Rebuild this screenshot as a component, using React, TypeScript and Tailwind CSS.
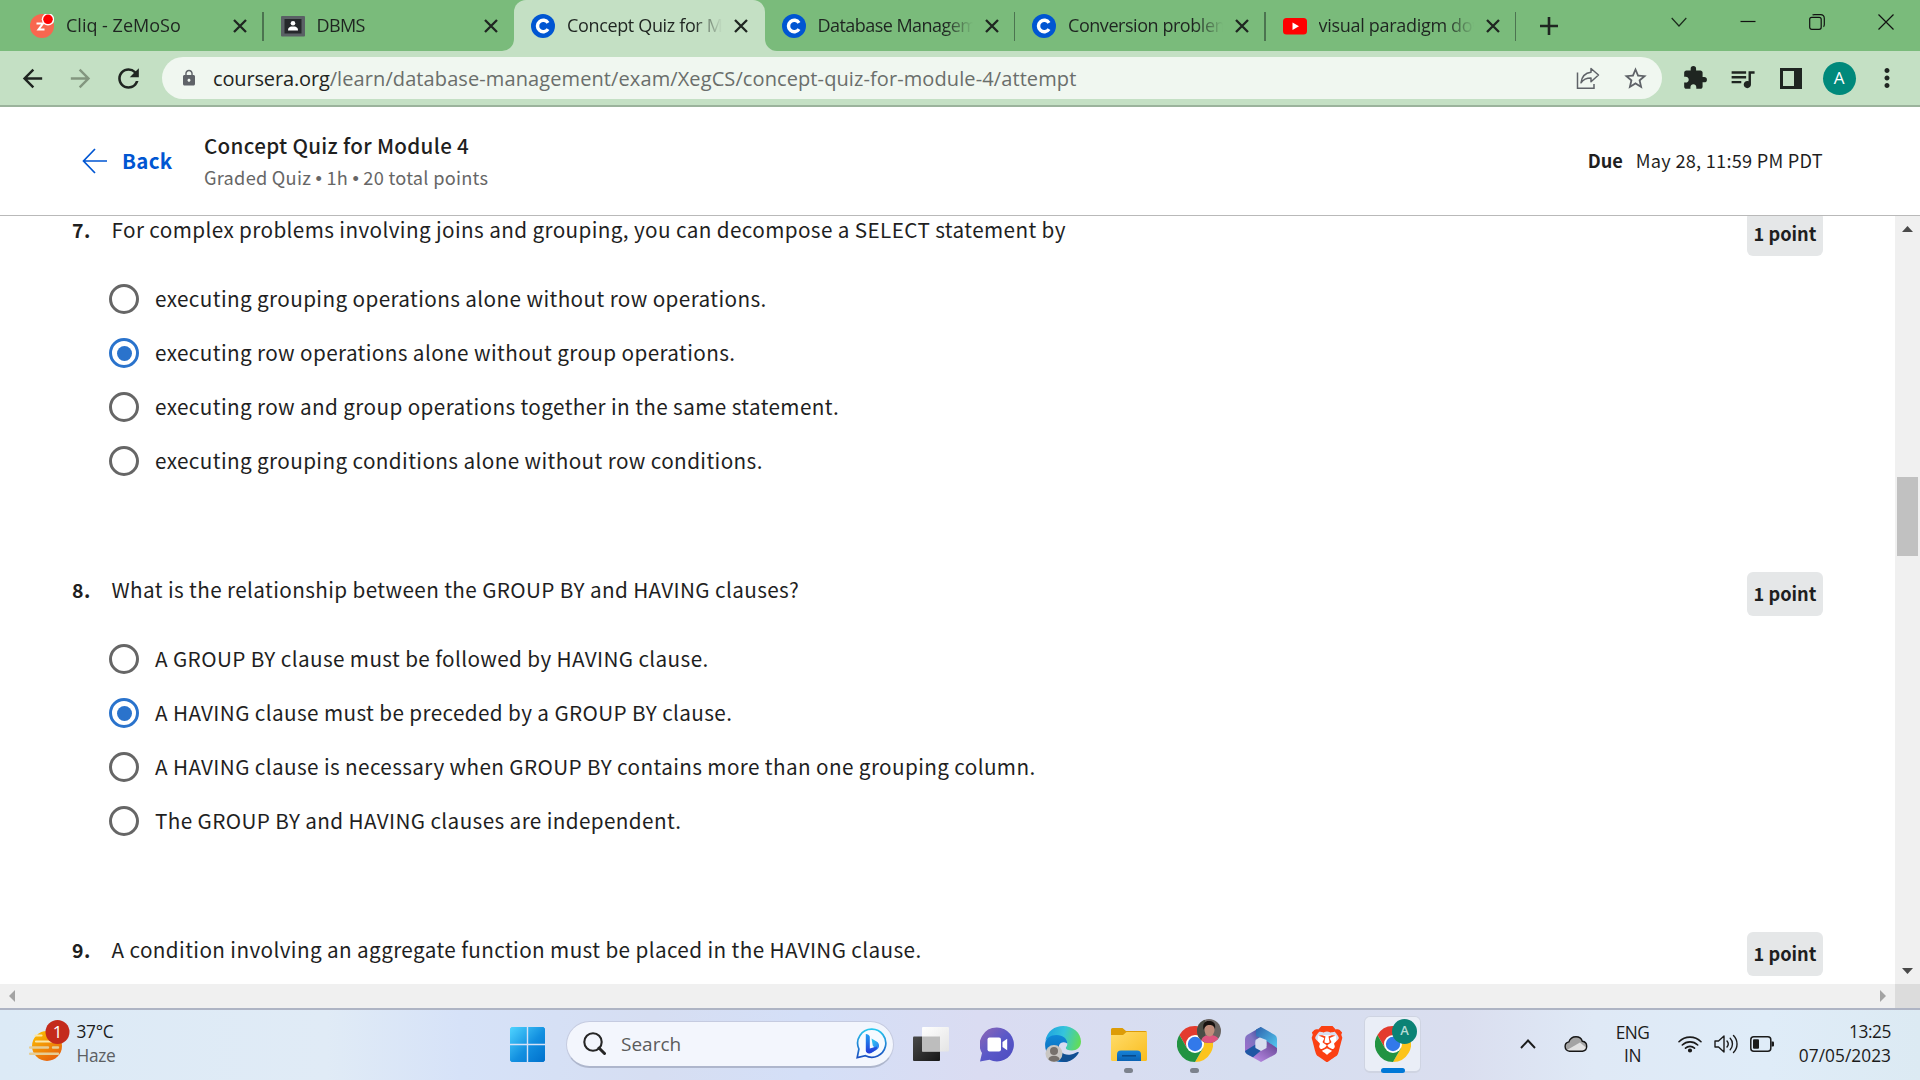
import React from "react";
import {
  MdArrowBack,
  MdArrowForward,
  MdExtension,
  MdLock,
  MdMoreVert,
  MdQueueMusic,
  MdRefresh,
  MdStarBorder,
} from "react-icons/md";
import { SiBrave } from "react-icons/si";

/* ---------- browser tabs ---------- */

function CliqIcon() {
  return (
    <svg viewBox="0 0 24 24" className="size-6 shrink-0">
      <circle cx="12" cy="12" r="12" fill="#f8674f" />
      <path d="M6.500 9.500h6.500l-4.500 6H14.500" fill="none" stroke="#fff" strokeWidth="2" />
      <circle cx="18" cy="5.300" r="6.200" fill="#fff" />
      <circle cx="18" cy="5.300" r="4.800" fill="#fe0000" />
    </svg>
  );
}

function ClassroomIcon() {
  return (
    <svg viewBox="0 0 24 24" className="size-6 shrink-0">
      <rect x="0" y="2" width="24" height="20.500" rx="1" fill="#5a6065" />
      <rect x="3.500" y="5" width="17" height="14.500" fill="#25282b" />
      <circle cx="12" cy="9.300" r="2.300" fill="#fff" />
      <path d="M7 16.500c0-3.600 2.500-4 5-4s5 .4 5 4z" fill="#fff" />
    </svg>
  );
}

function CourseraIcon() {
  return (
    <svg viewBox="0 0 24 24" className="size-6 shrink-0">
      <circle cx="12" cy="12" r="12" fill="#0056d2" />
      <path d="M17 8.900A5.700 5.700 0 1 0 17 15.100" fill="none" stroke="#fff" strokeWidth="3.500" />
    </svg>
  );
}

function YoutubeIcon() {
  return (
    <svg viewBox="0 0 24 24" className="size-6 shrink-0">
      <rect x="0" y="4" width="24" height="16.500" rx="3.500" fill="#f00" />
      <path d="M9.500 8.500v7.500l6.500-3.750z" fill="#fff" />
    </svg>
  );
}

const tabs = [
  { title: "Cliq - ZeMoSo", icon: <CliqIcon />, tracking: "tracking-[0px]" },
  { title: "DBMS", icon: <ClassroomIcon />, tracking: "tracking-[-0.6px]" },
  { title: "Concept Quiz for Module 4", icon: <CourseraIcon />, tracking: "tracking-[-0.35px]", active: true },
  { title: "Database Management", icon: <CourseraIcon />, tracking: "tracking-[-0.55px]" },
  { title: "Conversion problems", icon: <CourseraIcon />, tracking: "tracking-[-0.45px]" },
  { title: "visual paradigm download", icon: <YoutubeIcon />, tracking: "tracking-[-0.3px]" },
];

type TabProps = { title: string; icon: React.ReactNode; tracking: string; active?: boolean; separator: boolean };

function Tab({ title, icon, tracking, active, separator }: TabProps) {
  return (
    <div className={`relative flex h-[51px] w-[250.5px] shrink-0 items-center pl-[17px] ${active ? "rounded-t-xl bg-[#c4e0c4]" : ""}`}>
      {active && (
        <>
          <svg viewBox="0 0 12 12" className="absolute bottom-0 -left-3 size-3"><path d="M12 0v12H0A12 12 0 0 0 12 0z" fill="#c4e0c4" /></svg>
          <svg viewBox="0 0 12 12" className="absolute -right-3 bottom-0 size-3"><path d="M0 0v12h12A12 12 0 0 1 0 0z" fill="#c4e0c4" /></svg>
        </>
      )}
      {icon}
      <span className={`ml-3 w-[155px] overflow-hidden [mask-image:linear-gradient(to_right,#000_82%,transparent)] text-[18px] whitespace-nowrap text-[#1f2521] ${tracking}`}>
        {title}
      </span>
      <svg viewBox="0 0 14 14" className="ml-3 size-[14px] shrink-0">
        <path d="M1 1l12 12M13 1L1 13" stroke="#1f2521" strokeWidth="2.300" />
      </svg>
      {separator && <span className="absolute top-3 right-0 h-[29px] w-[1.5px] bg-[#4c7350]" />}
    </div>
  );
}

function TabStrip() {
  return (
    <div className="flex h-[51px] items-center bg-[#7abb7b] pl-[13px]">
      {tabs.map((t, i) => (
        <Tab key={t.title} {...t} separator={i !== 1 && i !== 2} />
      ))}
      <svg viewBox="0 0 18 18" className="ml-6 size-[18px]">
        <path d="M9 0v18M0 9h18" stroke="#1f2521" strokeWidth="2.600" />
      </svg>
      <div className="ml-auto flex pb-2">
        <div className="flex w-[69px] justify-center"><svg viewBox="0 0 16 16" className="size-4"><path d="M.7 4L8 12l7.300-8" fill="none" stroke="#1b2a1c" strokeWidth="1.200" /></svg></div>
        <div className="flex w-[69px] justify-center"><svg viewBox="0 0 16 16" className="size-4"><path d="M.5 7.500h15" stroke="#111" strokeWidth="1.200" /></svg></div>
        <div className="flex w-[69px] justify-center">
          <svg viewBox="0 0 16 16" className="size-4" fill="none" stroke="#111" strokeWidth="1.200">
            <rect x=".7" y="3.300" width="11.500" height="12" rx="2" />
            <path d="M3.500 1.200C4 .7 4.600.6 5.500.6h6C13.800.6 15.300 2 15.300 4.500v6c0 1-.2 1.700-.8 2.200" />
          </svg>
        </div>
        <div className="flex w-[69px] justify-center"><svg viewBox="0 0 16 16" className="size-4"><path d="M.5.500l15 15M15.500.500l-15 15" stroke="#111" strokeWidth="1.200" /></svg></div>
      </div>
    </div>
  );
}

function Toolbar() {
  return (
    <div className="flex h-14 items-center border-b-2 border-[#9bb39c] bg-[#c4e0c4] text-[#1f2521]">
      <div className="flex w-[162px] items-center pl-2">
        <div className="flex w-12 justify-center"><MdArrowBack size={29} /></div>
        <div className="flex w-12 justify-center text-[#83967f]"><MdArrowForward size={29} /></div>
        <div className="flex w-12 justify-center"><MdRefresh size={31} /></div>
      </div>
      <div className="flex h-[42px] w-[1500px] items-center rounded-full bg-[#f0f7f0] pl-[18px] text-[#6a6e6b]">
        <MdLock size={18} className="text-[#5f6368]" />
        <div className="ml-[15px] pt-px text-[20px] tracking-[0.1px] whitespace-nowrap">
          <span className="tracking-[-0.15px] text-[#1f2521]">coursera.org</span>/learn/database-management/exam/XegCS/concept-quiz-for-module-4/attempt
        </div>
        <div className="ml-auto flex pr-[3px] text-[#5f6368]">
          <div className="flex w-12 items-center justify-center">
            <svg viewBox="0 0 24 22" className="h-[22px] w-6" fill="none" stroke="currentColor" strokeWidth="1.500">
              <path d="M1.500 5.500v15.700h16.500V17" />
              <path d="M15 1.500l7.500 6.500-7.500 6.700V11C10 11 7.500 12 5 15.800 5.700 10 9 5.800 15 5.200z" strokeLinejoin="round" />
            </svg>
          </div>
          <div className="flex w-[47px] items-center justify-center"><MdStarBorder size={27} /></div>
        </div>
      </div>
      <div className="ml-auto flex items-center pr-[9px]">
        <div className="flex w-12 justify-center"><MdExtension size={26} /></div>
        <div className="flex w-12 justify-center pr-0.5"><MdQueueMusic size={29} /></div>
        <div className="flex w-12 justify-center"><div className="h-[21px] w-[22px] border-[3px] border-r-[8px] border-[#1f2521]" /></div>
        <div className="flex w-12 justify-center">
          <div className="flex size-[33px] items-center justify-center rounded-full bg-[#00897b] text-[17px] text-white">A</div>
        </div>
        <div className="flex w-12 justify-center"><MdMoreVert size={30} /></div>
      </div>
    </div>
  );
}

/* ---------- quiz page ---------- */

const questions = [
  {
    number: "7.",
    text: "For complex problems involving joins and grouping, you can decompose a SELECT statement by",
    selected: 1,
    options: [
      "executing grouping operations alone without row operations.",
      "executing row operations alone without group operations.",
      "executing row and group operations together in the same statement.",
      "executing grouping conditions alone without row conditions.",
    ],
  },
  {
    number: "8.",
    text: "What is the relationship between the GROUP BY and HAVING clauses?",
    selected: 1,
    options: [
      "A GROUP BY clause must be followed by HAVING clause.",
      "A HAVING clause must be preceded by a GROUP BY clause.",
      "A HAVING clause is necessary when GROUP BY contains more than one grouping column.",
      "The GROUP BY and HAVING clauses are independent.",
    ],
  },
  {
    number: "9.",
    text: "A condition involving an aggregate function must be placed in the HAVING clause.",
    selected: -1,
    options: [],
  },
];

function QuizHeader() {
  return (
    <header className="flex h-[109px] items-center border-b border-[#b9b9b9] bg-white pr-[97px] pl-[82px] text-[#1f1f1f]">
      <svg viewBox="0 0 26 26" className="size-[26px]" fill="none" stroke="#0056d2" strokeWidth="1.700">
        <path d="M25 13H1.500M13 1L1.500 13 13 25" />
      </svg>
      <span className="ml-[14px] w-[82px] pb-0.5 text-[20.5px] font-bold tracking-[0.3px] text-[#0056d2]">Back</span>
      <div className="pt-[3px]">
        <div className="text-[20.6px] leading-8 font-medium tracking-[0.32px]">Concept Quiz for Module 4</div>
        <div className="text-[18.2px] leading-[33px] tracking-[0.26px] text-[#666]">
          Graded Quiz <span className="font-['Liberation_Sans']">•</span> 1h <span className="font-['Liberation_Sans']">•</span> 20 total points
        </div>
      </div>
      <div className="ml-auto flex gap-[13px] text-[18.2px]">
        <span className="font-bold">Due</span>
        <span className="tracking-[0.25px]">May 28, 11:59 PM PDT</span>
      </div>
    </header>
  );
}

function Radio({ checked }: { checked: boolean }) {
  return (
    <span className={`flex size-[30px] shrink-0 items-center justify-center rounded-full border-[3px] ${checked ? "border-[#2a73cc]" : "border-[#666]"}`}>
      {checked && <span className="size-[15px] rounded-full bg-[#2a73cc]" />}
    </span>
  );
}

function Question({ q }: { q: (typeof questions)[number] }) {
  return (
    <section className="flex h-[360px] shrink-0 items-start justify-between pr-[72px] pl-[72px]">
      <div>
        <div className="flex items-baseline text-[20.7px] leading-[34px] tracking-[0.385px]">
          <span className="w-[39.5px] text-[19.5px] font-bold tracking-[0.6px]">{q.number}</span>
          <span className="whitespace-nowrap">{q.text}</span>
        </div>
        <div className="mt-[25px] ml-[37px]">
          {q.options.map((o, i) => (
            <label key={o} className="flex h-[54px] items-center">
              <Radio checked={i === q.selected} />
              <span className="ml-4 text-[20.7px] tracking-[0.385px] whitespace-nowrap">{o}</span>
            </label>
          ))}
        </div>
      </div>
      <span className="flex h-11 w-[76px] items-center justify-center rounded-md bg-[#e5e7e8] pb-px text-[18.2px] font-bold">1 point</span>
    </section>
  );
}

function QuizPage() {
  return (
    <div className="font-['Noto_Sans_CJK_SC',sans-serif] leading-normal text-[#1f1f1f]">
      <QuizHeader />
      <div className="flex h-[768px] bg-white">
        <div className="flex flex-1 flex-col overflow-hidden">
          <div className="-mt-1 flex flex-col">
            {questions.map((q) => (
              <Question key={q.number} q={q} />
            ))}
          </div>
        </div>
        <div className="flex w-[25px] flex-col items-center bg-[#f0f0f0] pt-2.5 pb-2.5">
          <svg viewBox="0 0 11 6" className="h-1.5 w-[11px]"><path d="M0 6L5.500 0 11 6z" fill="#4a4a4a" /></svg>
          <div className="mt-[245px] h-[79px] w-[21px] bg-[#c1c1c1]" />
          <svg viewBox="0 0 11 6" className="mt-auto h-1.5 w-[11px]"><path d="M0 0l5.500 6L11 0z" fill="#4a4a4a" /></svg>
        </div>
      </div>
      <div className="flex h-6 bg-[#f0f0f0]">
        <div className="flex flex-1 items-center justify-between px-[9px]">
          <svg viewBox="0 0 6 12" className="h-3 w-1.5"><path d="M6 0v12L0 6z" fill="#a3a3a3" /></svg>
          <svg viewBox="0 0 6 12" className="h-3 w-1.5"><path d="M0 0v12l6-6z" fill="#a3a3a3" /></svg>
        </div>
        <div className="w-[25px] bg-[#dcdcdc]" />
      </div>
    </div>
  );
}

/* ---------- taskbar ---------- */

function ChromeLogo() {
  return (
    <svg viewBox="-18 -18 36 36" className="size-9">
      <path d="M-15.590-9A18 18 0 0 1 15.590-9H0V0L-7.790 4.500z" fill="#e33b2e" />
      <path d="M15.590-9A18 18 0 0 1 0 18L7.790 4.500 0 0V-9z" fill="#fcc41c" />
      <path d="M0 18A18 18 0 0 1-15.590-9L-7.790 4.500 0 0 7.790 4.500z" fill="#229342" />
      <circle r="9" fill="#fff" />
      <circle r="7.200" fill="#3279ea" />
    </svg>
  );
}

function WeatherIcon() {
  return (
    <svg viewBox="0 0 42 44" className="h-11 w-[42px]">
      <defs>
        <linearGradient id="sun" x1="0" y1="0" x2=".6" y2="1"><stop offset="0" stopColor="#fdc500" /><stop offset="1" stopColor="#e8640c" /></linearGradient>
      </defs>
      <circle cx="18" cy="26" r="15" fill="url(#sun)" />
      <path d="M6.500 15.500h6M7 21.500h20" stroke="#fbe7a8" strokeWidth="2.200" strokeLinecap="round" />
      <path d="M1 27.500h18M24 27.500h5M1 33.700h28" stroke="#e6cd95" strokeWidth="2.400" strokeLinecap="round" />
      <circle cx="28.500" cy="12" r="12" fill="#c42b1c" />
    </svg>
  );
}

function StartIcon() {
  return (
    <svg viewBox="0 0 35 35" className="size-[35px]">
      <defs>
        <linearGradient id="win" gradientUnits="userSpaceOnUse" x1="0" y1="0" x2="35" y2="35"><stop offset="0" stopColor="#4fd4ff" /><stop offset=".55" stopColor="#128fe0" /><stop offset="1" stopColor="#0070cc" /></linearGradient>
      </defs>
      <path d="M1.500 0H16.800v16.800H0V1.500zM18.200 0H33.500L35 1.500v15.300H18.200zM0 18.200h16.800V35H1.500L0 33.500zM18.200 18.200H35v15.300L33.500 35H18.200z" fill="url(#win)" />
    </svg>
  );
}

function BingIcon() {
  return (
    <svg viewBox="0 0 31 31" className="size-[31px]">
      <defs>
        <linearGradient id="bingRing" x1="0" y1="0" x2="0" y2="1"><stop offset="0" stopColor="#28c8ee" /><stop offset="1" stopColor="#1a4fc0" /></linearGradient>
        <linearGradient id="bingB" x1="0" y1="0" x2="0" y2="1"><stop offset="0" stopColor="#1f9cf2" /><stop offset="1" stopColor="#2338d8" /></linearGradient>
        <linearGradient id="bingC" x1="0" y1="0" x2="1" y2="1"><stop offset="0" stopColor="#2fe0f2" /><stop offset="1" stopColor="#2a6cf0" /></linearGradient>
      </defs>
      <path d="M16 1.200a14 14 0 1 1-6.500 26.500L1.200 29.600 2.900 21A14 14 0 0 1 16 1.200z" fill="#f6faff" stroke="url(#bingRing)" strokeWidth="1.700" />
      <path d="M15.500 10.500l5.500 3.200c2.800 2 2.600 6 .3 7.500l-6 3.800-3-2 6-3.800-1.500-1.500z" fill="url(#bingC)" />
      <path d="M9.800 6c1.500 0 4 1.200 4 2.800V20.500l7-2c.8 1.500 0 3-1.300 3.800l-5 2.900c-2.500 1-4.700-.7-4.700-2.700z" fill="url(#bingB)" />
    </svg>
  );
}

function TaskViewIcon() {
  return (
    <svg viewBox="0 0 36 34" className="h-[34px] w-9">
      <defs>
        <linearGradient id="tv" x1="0" y1="0" x2="1" y2="1"><stop offset="0" stopColor="#4a4a4a" /><stop offset="1" stopColor="#161616" /></linearGradient>
        <linearGradient id="tv2" x1="0" y1="0" x2="1" y2="1"><stop offset="0" stopColor="#fff" /><stop offset="1" stopColor="#e4e4e4" /></linearGradient>
      </defs>
      <rect x="0" y="9.500" width="27" height="24.500" rx="1" fill="url(#tv)" />
      <rect x="9" y="0" width="27" height="24.500" rx="1" fill="url(#tv2)" />
      <rect x="9" y="9.500" width="18" height="15" fill="#bdbdbd" />
    </svg>
  );
}

function ChatIcon() {
  return (
    <svg viewBox="0 0 34 35" className="h-[35px] w-[34px]">
      <defs>
        <linearGradient id="chat" x1="0" y1="0" x2="1" y2="1"><stop offset="0" stopColor="#9068b4" /><stop offset=".5" stopColor="#5a58c8" /><stop offset="1" stopColor="#4c4bc0" /></linearGradient>
      </defs>
      <path d="M17 .500a17 17 0 1 1-7.500 32.300L0 34.500l2-8.500A17 17 0 0 1 17 .500z" fill="url(#chat)" />
      <rect x="7.500" y="10.500" width="13.500" height="14" rx="2" fill="#fff" />
      <path d="M22.500 15l4.700-3.200v11.400L22.500 20z" fill="#fff" />
    </svg>
  );
}

function EdgeIcon() {
  return (
    <svg viewBox="0 0 36 36" className="size-9">
      <defs>
        <linearGradient id="edgeTop" x1="0" y1=".3" x2="1" y2=".5"><stop offset="0" stopColor="#1ea2e0" /><stop offset=".5" stopColor="#35c4dc" /><stop offset="1" stopColor="#62dc58" /></linearGradient>
        <linearGradient id="edgeMid" x1="0" y1="0" x2="0" y2="1"><stop offset="0" stopColor="#1089d8" /><stop offset="1" stopColor="#0c62b0" /></linearGradient>
      </defs>
      <path d="M.300 15C2 5 10 0 18 0c10 0 18 7 18 15.500 0 6-4.500 9-9 9-4 0-6.200-1.200-6.200-2.500 0-1 1.500-1.500 1.500-4 0-4-4.300-7.500-10-7.500C6 10.500 2 12.500.300 15z" fill="url(#edgeTop)" />
      <path d="M.200 17C1 12 5.500 9 11.500 9c6.500 0 10.800 4 10.800 8.500C17 14 13 18 13.500 23.500c.500 6.500 6 11 12 10.500C20 37.500 10 37 4.500 30.500 1 26.500-.300 22 .200 17z" fill="url(#edgeMid)" />
      <path d="M14 19c-1.500 6 5 11 12 9.500 3-.600 5-1.800 6.700-2.500 1-.300 1.300.500.800 1.200C30 33 24.500 36 19 36c-8-1-10-11-5-17z" fill="#114f92" />
      <circle cx="9" cy="27.500" r="8.500" fill="#c9c6c2" />
      <circle cx="9" cy="25" r="4" fill="#77716c" />
      <path d="M3.500 33.500c0-5 11-5 11 0-3 3-8 3-11 0z" fill="#77716c" />
    </svg>
  );
}

function ExplorerIcon() {
  return (
    <svg viewBox="0 0 36 33" className="h-[33px] w-9">
      <defs>
        <linearGradient id="folder" x1="0" y1="0" x2="1" y2="1"><stop offset="0" stopColor="#ffdc6b" /><stop offset="1" stopColor="#f9bd1e" /></linearGradient>
        <linearGradient id="drawer" x1="0" y1="0" x2="0" y2="1"><stop offset="0" stopColor="#1683d8" /><stop offset="1" stopColor="#0a62b4" /></linearGradient>
      </defs>
      <path d="M0 7V1.500Q0 0 1.500 0H11.500L15 3H34.500Q36 3 36 4.500V8z" fill="#dd9c07" />
      <path d="M0 7H12L15.500 4H36V31.500Q36 33 34.500 33H1.500Q0 33 0 31.500z" fill="url(#folder)" />
      <path d="M6 33V26.500Q6 22.500 10 22.500H26Q30 22.500 30 26.500V33z" fill="url(#drawer)" />
      <path d="M11 27.800H25" stroke="#064a8c" strokeWidth="1.600" />
    </svg>
  );
}

function OfficeIcon() {
  return (
    <svg viewBox="0 0 32 35" className="h-[35px] w-8">
      <defs>
        <linearGradient id="m1" x1="1" y1="0" x2="0" y2="1"><stop offset="0" stopColor="#2a3f8e" /><stop offset=".5" stopColor="#7e74c2" /><stop offset="1" stopColor="#a06ccc" /></linearGradient>
        <linearGradient id="m2" x1="0" y1="0" x2="1" y2="1"><stop offset="0" stopColor="#2d62ad" /><stop offset="1" stopColor="#57d0f5" /></linearGradient>
        <linearGradient id="m3" x1="1" y1="0" x2="0" y2="1"><stop offset="0" stopColor="#5e3f8e" /><stop offset="1" stopColor="#c796f0" /></linearGradient>
      </defs>
      <path d="M16 0L2 8Q0 9.500 0 12V25L10.500 20V13L16 9.500z" fill="url(#m1)" />
      <path d="M11 2.500L16 0 30 8Q32 9.500 32 12V24L21.500 19V13L11 9z" fill="url(#m2)" />
      <path d="M21.500 14L32 21V24Q32 26 30 27.500L16 35 3 27.800 16 22 21.500 19z" fill="url(#m3)" />
      <path d="M0 24L10.500 17.500V20L16 23.500 8 30.300 2 27.300Q0 26 0 24z" fill="#1f57a4" />
      <path d="M16 11.500l5.500 3v6.500L16 24l-5.500-3v-6.500z" fill="#d9deef" />
    </svg>
  );
}

function BraveIcon() {
  return (
    <div className="relative flex size-9 items-center justify-center">
      <svg viewBox="0 0 24 24" className="absolute size-[30px]"><path d="M5 5h14l1 9-8 8-8-8z" fill="#fff" /></svg>
      <SiBrave size={36} className="relative text-[#fb4013]" />
    </div>
  );
}

function AppSlot({ children, running }: { children: React.ReactNode; running?: boolean }) {
  return (
    <div className="relative flex h-[57px] w-[66px] items-center justify-center">
      {children}
      {running && <span className="absolute bottom-0 h-[5px] w-[9px] rounded-full bg-[#7c828d]" />}
    </div>
  );
}

function Taskbar() {
  return (
    <footer className="flex h-[72px] items-center border-t-2 border-[#aeb4c4] bg-[linear-gradient(90deg,#dceaf6_0%,#e0ebf6_17%,#d6e2f8_24%,#d6def2_34%,#d4dff7_42%,#dadcf2_51%,#d6def0_65%,#dadeef_76%,#dfe9f6_83%,#dfecf8_92%,#dceaf3_100%)] pb-0.5 text-[#1b1b1b]">
      <div className="relative ml-[29px] flex w-[481px] items-center gap-[5.5px]">
        <div className="relative mb-1">
          <WeatherIcon />
          <span className="absolute top-0 left-[16.500px] flex size-6 items-center justify-center text-[17px] text-white">1</span>
        </div>
        <div className="text-[17.3px] leading-6 tracking-[-0.3px]">
          <div>37°C</div>
          <div className="text-[#5c5f63]">Haze</div>
        </div>
      </div>
      <StartIcon />
      <div className="ml-[21px] flex h-[47px] w-[328px] items-center rounded-full border border-b-2 border-[#c5cbe0] border-b-[#aeb6cc] bg-[#f3f6fd] pr-[6px] pl-4">
        <svg viewBox="0 0 23 23" className="size-[23px]" fill="none" stroke="#262626">
          <circle cx="10" cy="10" r="8.700" strokeWidth="2.100" />
          <path d="M16 16l5.500 5.500" strokeWidth="3" strokeLinecap="round" />
        </svg>
        <span className="ml-[15px] pt-0.5 text-[19px] text-[#5b5b5b]">Search</span>
        <span className="ml-auto"><BingIcon /></span>
      </div>
      <div className="ml-[3.5px] flex">
        <AppSlot><TaskViewIcon /></AppSlot>
        <AppSlot><ChatIcon /></AppSlot>
        <AppSlot><EdgeIcon /></AppSlot>
        <AppSlot running><ExplorerIcon /></AppSlot>
        <AppSlot running>
          <ChromeLogo />
          <svg viewBox="0 0 24 24" className="absolute top-[3px] left-[35px] size-6">
            <defs><clipPath id="face"><circle cx="12" cy="12" r="12" /></clipPath></defs>
            <g clipPath="url(#face)">
              <rect width="24" height="24" fill="#6b6562" />
              <rect width="8" height="24" fill="#4a4d45" />
              <path d="M4 24c0-6 4-8 9-8s9 2 10 8z" fill="#e0557f" />
              <ellipse cx="12.500" cy="11" rx="5" ry="6.500" fill="#c08c7a" />
              <path d="M6.500 11C5 3 9 1.500 13 2s6 3 5 8c-1-4-4-4-6-4S8 7 6.500 11z" fill="#17120f" />
            </g>
          </svg>
        </AppSlot>
        <AppSlot><OfficeIcon /></AppSlot>
        <AppSlot><BraveIcon /></AppSlot>
        <div className="relative ml-[4.5px] flex size-[57px] items-center justify-center rounded-md border border-b-2 border-[#cfd4e2] bg-[#eaeef7]">
          <ChromeLogo />
          <span className="absolute top-0.5 left-[27px] flex size-[25px] items-center justify-center rounded-full bg-[#0b8275] text-[13px] font-semibold text-[#b4dcd6]">A</span>
          <span className="absolute -bottom-0.5 h-[5px] w-6 rounded-full bg-[#0078d7]" />
        </div>
      </div>
      <div className="ml-auto flex items-center pr-[29px]">
        <svg viewBox="0 0 16 10" className="h-2.5 w-4"><path d="M1 9l7-7.500L15 9" fill="none" stroke="#1b1b1b" strokeWidth="1.900" /></svg>
        <svg viewBox="0 0 24 16" className="ml-7 h-4 w-6">
          <path d="M5.500 15.200a4.700 4.700 0 0 1-.6-9.300C6 2.500 9 .8 12 .8c3.200 0 5.500 1.700 6.300 4.500a5 5 0 0 1 .2 9.900z" fill="#a4a4a4" />
          <path d="M3 14l13-7.500 6.500 5.500-2 3H5z" fill="#e2e2e2" />
          <path d="M5.500 15.200a4.700 4.700 0 0 1-.6-9.300C6 2.500 9 .8 12 .8c3.200 0 5.500 1.700 6.300 4.500a5 5 0 0 1 .2 9.900z" fill="none" stroke="#151515" strokeWidth="1.400" />
        </svg>
        <div className="ml-6 w-[42px] text-center text-[17.300px] leading-[23px] tracking-[-0.5px]">
          <div>ENG</div>
          <div>IN</div>
        </div>
        <svg viewBox="0 0 24 18" className="ml-6 h-[18px] w-6" fill="none" stroke="#1b1b1b" strokeWidth="1.600" strokeLinecap="round">
          <path d="M1 6.700a15.500 15.500 0 0 1 22 0M4.300 10a11 11 0 0 1 15.400 0M7.500 13.200a6.500 6.500 0 0 1 9 0" />
          <circle cx="12" cy="15.500" r="1.300" fill="#1b1b1b" />
        </svg>
        <svg viewBox="0 0 24 20" className="ml-3 h-5 w-6" fill="none" stroke="#1b1b1b" strokeWidth="1.400" strokeLinecap="round" strokeLinejoin="round">
          <path d="M1 7h3.500L10 2v16l-5.500-5H1z" />
          <path d="M13 7c1.500 1.800 1.500 4.200 0 6M16.200 4.300c3 3.200 3 8.200 0 11.400M19.500 1.500c4.700 4.800 4.700 12.200 0 17" />
        </svg>
        <svg viewBox="0 0 24 16" className="ml-3 h-4 w-6" fill="none">
          <rect x=".8" y=".8" width="20" height="14.400" rx="3" stroke="#1b1b1b" strokeWidth="1.500" />
          <rect x="3" y="3.300" width="6" height="9.400" rx="1" fill="#1b1b1b" />
          <path d="M21.500 5.500H23a1 1 0 0 1 1 1v3a1 1 0 0 1-1 1h-1.500z" fill="#1b1b1b" />
        </svg>
        <div className="w-[117.5px] text-right text-[17.300px] leading-6">
          <div className="tracking-[-0.4px]">13:25</div>
          <div className="tracking-[0.05px]">07/05/2023</div>
        </div>
      </div>
    </footer>
  );
}

export default function App() {
  return (
    <div className="h-[1080px] w-[1920px] overflow-hidden bg-white font-['Open_Sans',sans-serif]">
      <TabStrip />
      <Toolbar />
      <QuizPage />
      <Taskbar />
    </div>
  );
}
